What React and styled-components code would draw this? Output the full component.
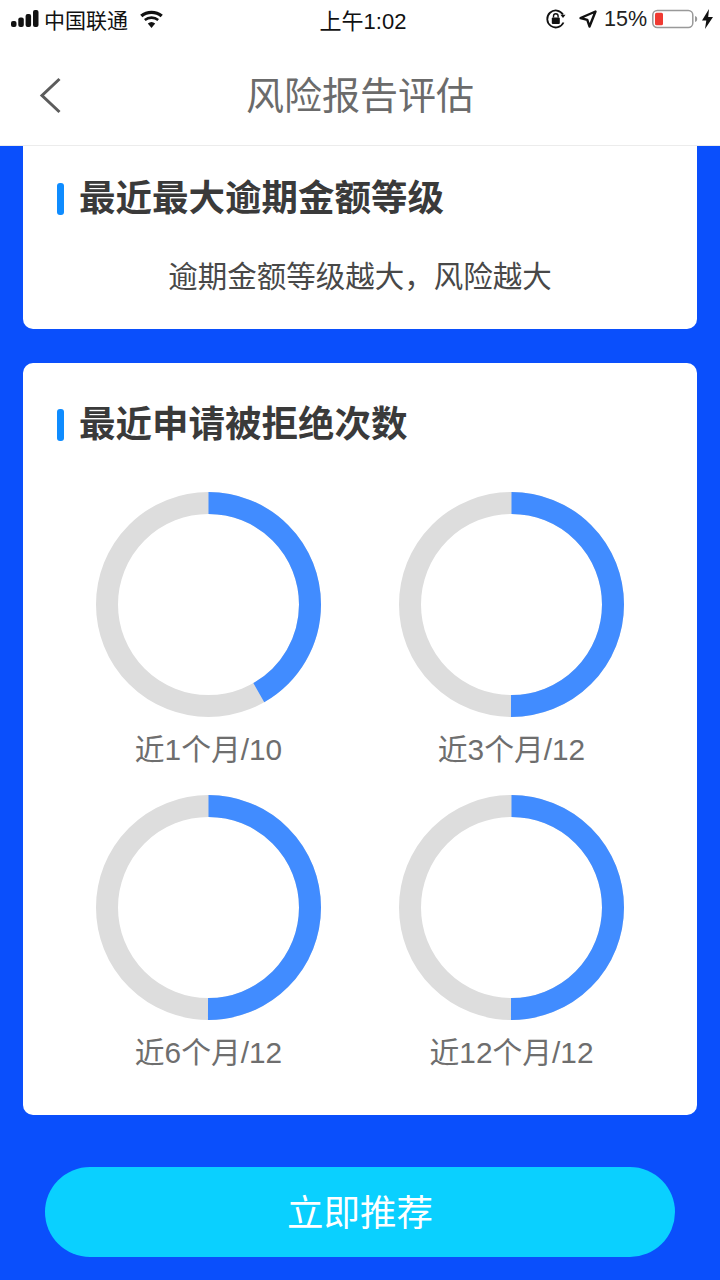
import React from 'react';
import styled, { createGlobalStyle } from 'styled-components';

const GlobalStyle = createGlobalStyle`
  html, body {
    margin: 0;
    padding: 0;
    background: #0a4ffc;
  }
  body {
    font-family: "Liberation Sans", "Noto Sans CJK SC", sans-serif;
  }
`;

const Page = styled.div`
  width: 720px;
  height: 1280px;
  overflow: hidden;
  display: flex;
  flex-direction: column;
  background: #0a4ffc;
`;

const Header = styled.div`
  background: #fff;
  border-bottom: 1px solid #ececec;
  height: 145px;
  flex-shrink: 0;
`;

const StatusBar = styled.div`
  height: 37px;
  display: flex;
  align-items: center;
  justify-content: space-between;
  padding: 0 7px 0 11px;
  color: #111;
`;

const StatusSide = styled.div`
  flex: 1;
  display: flex;
  align-items: center;
  justify-content: ${(p) => (p.$right ? 'flex-end' : 'flex-start')};
  gap: ${(p) => p.$gap || 0}px;
`;

const Carrier = styled.span`
  font-size: 21px;
  margin-left: 5px;
  margin-right: 11px;
`;

const Clock = styled.span`
  font-size: 22px;
  margin: 0 -1px 0 1px;
`;

const Percent = styled.span`
  font-size: 21.5px;
  color: #222;
  margin-top: 2px;
  margin-right: -1px;
`;

const NavBar = styled.div`
  height: 108px;
  display: flex;
  align-items: center;
  justify-content: center;
  position: relative;
`;

const BackIcon = styled.svg`
  position: absolute;
  left: 39px;
  top: 39px;
`;

const NavTitle = styled.div`
  font-size: 38px;
  color: #6b6b6b;
  margin-top: 3px;
`;

const Content = styled.div`
  display: flex;
  flex-direction: column;
  padding: 0 23px;
  gap: 34px;
`;

const Card = styled.div`
  background: #fff;
  border-radius: ${(p) => (p.$flatTop ? '0 0 10px 10px' : '10px')};
  height: ${(p) => p.$height}px;
  padding-top: ${(p) => p.$top}px;
  box-sizing: border-box;
`;

const SectionTitle = styled.div`
  display: flex;
  align-items: center;
  gap: 15px;
  padding-left: 34px;
  height: 48px;
  line-height: 42px;
  font-size: 36.5px;
  font-weight: 700;
  color: #3a3a3a;
`;

const TitleMark = styled.span`
  width: 7px;
  height: 32px;
  border-radius: 3px;
  background: #0f8cff;
`;

const Note = styled.div`
  text-align: center;
  font-size: 29.5px;
  color: #484848;
  margin-top: 30px;
`;

const RingGrid = styled.div`
  display: grid;
  grid-template-columns: 225px 225px;
  column-gap: 78px;
  row-gap: 15px;
  padding-left: 73px;
  margin-top: 43px;
`;

const RingItem = styled.div`
  display: flex;
  flex-direction: column;
  align-items: center;
`;

const RingLabel = styled.div`
  font-size: 29.8px;
  color: #6e6e6e;
  height: 63px;
  line-height: 66px;
  white-space: nowrap;
`;

const Footer = styled.div`
  padding: 52px 45px 0;
`;

const ActionButton = styled.button`
  display: block;
  width: 100%;
  height: 90px;
  border: none;
  border-radius: 45px;
  background: #0ad0ff;
  color: #fff;
  font-family: inherit;
  font-size: 36.5px;
  padding: 0 0 4px;
`;

const Ring = ({ degrees }) => {
  const r = 101.5;
  const c = 2 * Math.PI * r;
  return (
    <svg width="225" height="225" viewBox="0 0 225 225">
      <circle cx="112.5" cy="112.5" r={r} fill="none" stroke="#dddddd" strokeWidth="22" />
      <circle
        cx="112.5"
        cy="112.5"
        r={r}
        fill="none"
        stroke="#418cff"
        strokeWidth="22"
        strokeDasharray={`${(c * degrees) / 360} ${c}`}
        transform="rotate(-90 112.5 112.5)"
      />
    </svg>
  );
};

const rings = [
  { label: '近1个月/10', degrees: 150 },
  { label: '近3个月/12', degrees: 180 },
  { label: '近6个月/12', degrees: 180 },
  { label: '近12个月/12', degrees: 180 },
];

const App = () => (
  <Page>
    <GlobalStyle />
    <Header>
      <StatusBar>
        <StatusSide>
          <svg width="28" height="17" viewBox="0 0 28 17">
            <rect x="0" y="11" width="5.500" height="6" rx="2" fill="#111" />
            <rect x="7.300" y="7.500" width="5.500" height="9.500" rx="2" fill="#111" />
            <rect x="14.600" y="4" width="5.500" height="13" rx="2" fill="#111" />
            <rect x="22" y="0" width="5.500" height="17" rx="2" fill="#111" />
          </svg>
          <Carrier>中国联通</Carrier>
          <svg width="25" height="18" viewBox="0 0 25 18">
            <path d="M12.500 18 8.800 13.600a5.800 5.800 0 0 1 7.400 0Z" fill="#111" />
            <path d="M6.600 11A9.300 9.300 0 0 1 18.400 11L20 9A12 12 0 0 0 5 9Z" fill="#111" />
            <path d="M3.400 7.200A14.300 14.300 0 0 1 21.600 7.200L23.800 4.700A18 18 0 0 0 1.200 4.700Z" fill="#111" />
          </svg>
        </StatusSide>
        <Clock>上午1:02</Clock>
        <StatusSide $right $gap={6}>
          <svg width="22" height="22" viewBox="0 0 22 22" fill="none">
            <path d="M18.500 14.500A8.500 8.500 0 1 1 18 6.500" stroke="#111" strokeWidth="1.800" />
            <path d="M15.500 6.800h5l-2.500 3.200Z" fill="#111" />
            <rect x="6.800" y="9.500" width="8" height="6.500" rx="1" fill="#111" />
            <path d="M8.500 9.500V8a2.300 2.300 0 0 1 4.600 0v1.500" stroke="#111" strokeWidth="1.400" />
          </svg>
          <svg width="20" height="20" viewBox="0 0 20 20" style={{ marginLeft: 5 }} fill="none">
            <path d="M17.500 2.500 2.500 9l6.800 1.800L11.500 17.500Z" stroke="#111" strokeWidth="2.400" strokeLinejoin="round" />
          </svg>
          <Percent>15%</Percent>
          <svg width="47" height="20" viewBox="0 0 47 20" fill="none">
            <rect x="0.800" y="1.500" width="40" height="17" rx="4.500" stroke="#999" strokeWidth="1.500" />
            <rect x="3" y="3.700" width="8" height="12.600" rx="1.500" fill="#f03a32" />
            <path d="M43 7v6c1.500-.4 2.200-1.500 2.200-3S44.500 7.400 43 7Z" fill="#999" />
          </svg>
          <svg width="11" height="20" viewBox="0 0 11 20" style={{ marginLeft: -3 }}>
            <path d="M7 0 0 11.500h4.300L3 20l8-12H6.200Z" fill="#111" />
          </svg>
        </StatusSide>
      </StatusBar>
      <NavBar>
        <BackIcon width="24" height="40" viewBox="0 0 24 40" fill="none">
          <path d="M20.500 3 3 19.500 20.500 36" stroke="#5c5c5c" strokeWidth="3" />
        </BackIcon>
        <NavTitle>风险报告评估</NavTitle>
      </NavBar>
    </Header>
    <Content>
      <Card $flatTop $height={183} $top={29}>
        <SectionTitle>
          <TitleMark />
          最近最大逾期金额等级
        </SectionTitle>
        <Note>逾期金额等级越大，风险越大</Note>
      </Card>
      <Card $height={752} $top={38}>
        <SectionTitle>
          <TitleMark />
          最近申请被拒绝次数
        </SectionTitle>
        <RingGrid>
          {rings.map((ring) => (
            <RingItem key={ring.label}>
              <Ring degrees={ring.degrees} />
              <RingLabel>{ring.label}</RingLabel>
            </RingItem>
          ))}
        </RingGrid>
      </Card>
    </Content>
    <Footer>
      <ActionButton>立即推荐</ActionButton>
    </Footer>
  </Page>
);

export default App;
